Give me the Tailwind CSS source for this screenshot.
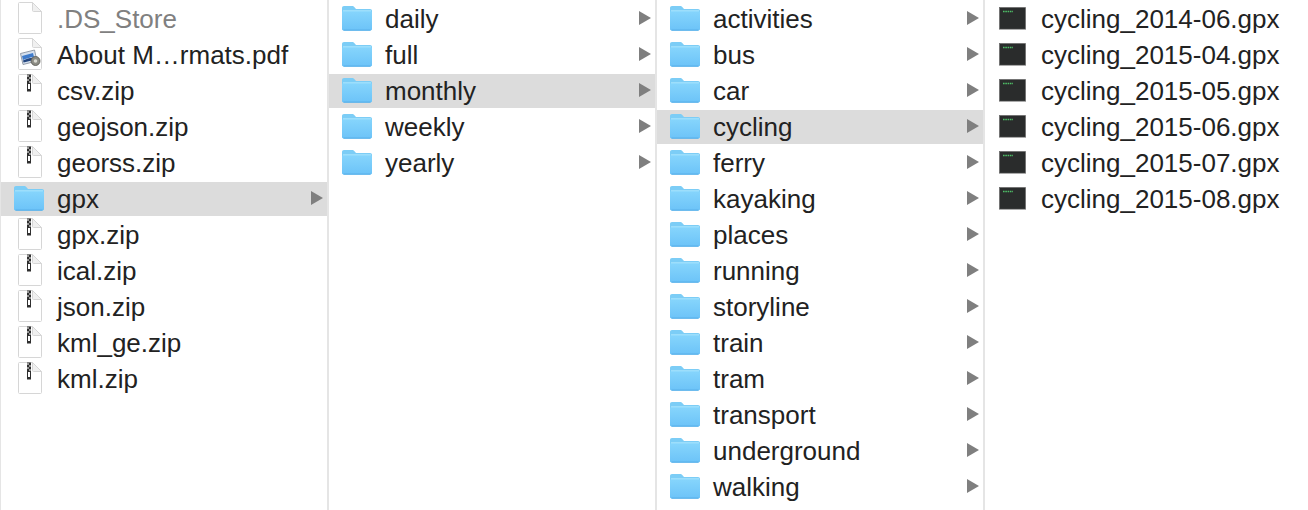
<!DOCTYPE html>
<html lang="en">
<head>
<meta charset="UTF-8">
<title>Finder columns</title>
<script src="https://cdn.jsdelivr.net/npm/@tailwindcss/browser@4"></script>
</head>
<body class="bg-white overflow-hidden">
<svg width="0" height="0" class="absolute">
  <defs>
    <linearGradient id="fg" x1="0" y1="0" x2="0" y2="1">
      <stop offset="0" stop-color="#86d5fc"/><stop offset="1" stop-color="#6cc3f8"/>
    </linearGradient>
    <symbol id="folder" viewBox="0 0 32 26">
      <path d="M1 3C1 1.800 1.800 1 3 1h8c1.200 0 1.800.4 2.500 1.300L15 4h14c1.300 0 2 .8 2 2v17.500c0 1.300-.7 2-2 2H3c-1.300 0-2-.7-2-2Z" fill="#7ccdf6"/>
      <path d="M1 7.500C1 6.600 1.600 6 3 6h26c1.400 0 2 .6 2 1.500v16c0 1.300-.7 2-2 2H3c-1.300 0-2-.7-2-2Z" fill="url(#fg)"/>
      <path d="M2 5.800h28" stroke="#ace6fe" stroke-width="1"/>
      <path d="M2.500 25.100h27" stroke="#54ace6" stroke-width="1"/>
    </symbol>
    <symbol id="page" viewBox="0 0 26 34">
      <path d="M1.500 2.500c0-.6.4-1 1-1h13l9 9v21c0 .6-.4 1-1 1h-21c-.6 0-1-.4-1-1Z" fill="#fff" stroke="#d6d6d6"/>
      <path d="M15.500 1.500v8c0 .6.400 1 1 1h8Z" fill="#f0f0f0" stroke="#d6d6d6"/>
    </symbol>
    <symbol id="zip" viewBox="0 0 26 34">
      <use href="#page"/>
      <rect x="10" y="1.500" width="4" height="17" fill="#2f2f2f"/>
      <path d="M10 3h2M12 5h2M10 7h2M12 9h2" stroke="#fff" stroke-width="1"/>
      <rect x="11" y="11" width="2" height="5" fill="#fff"/>
    </symbol>
    <symbol id="pdf" viewBox="0 0 26 34">
      <use href="#page"/>
      <path d="M3.500 16.500l14-3.500 2.500 11-14 3.500Z" fill="#d5e0ee" stroke="#7d8794" stroke-width=".8"/>
      <path d="M5 19l11-3 1 4c-4 0-8 2-11 3Z" fill="#3f7bcb"/>
      <path d="M6 23.500c4-2 8-3 12-3l.6 2-12 3Z" fill="#24467f"/>
      <circle cx="18.500" cy="24" r="4.500" fill="#8c8c84" stroke="#55554f" stroke-width=".8"/>
      <circle cx="18.500" cy="24" r="1.800" fill="#dadad2"/>
    </symbol>
    <symbol id="gpxfile" viewBox="0 0 27 23">
      <rect x=".5" y=".5" width="26" height="21.500" fill="#2a2c2c" stroke="#555" stroke-width=".5"/>
      <path d="M4 4.500h10" stroke="#4fbf67" stroke-width="1.400" stroke-dasharray="1.600 .7"/>
      <path d="M0 22.500h27" stroke="#aaa" stroke-width="1"/>
    </symbol>
    <symbol id="arrow" viewBox="0 0 12 14">
      <path d="M0 0l12 7-12 7Z" fill="#7f7f7f"/>
    </symbol>
  </defs>
</svg>

<div class="flex w-[1308px] h-[510px] text-[#222] font-['Liberation_Sans',Arial,sans-serif] text-[26px] antialiased">

  <!-- col 1 -->
  <ul class="w-[329px] shrink-0 border-l border-r-2 border-[#e5e5e5]">
    <li class="flex items-center h-[36px] pl-[16px] text-[#808080]"><svg class="w-[26px] h-[34px] mr-[14px]"><use href="#page"/></svg><span class="pt-[2px] leading-[34px]">.DS_Store</span></li>
    <li class="flex items-center h-[36px] pl-[16px]"><svg class="w-[26px] h-[34px] mr-[14px]"><use href="#pdf"/></svg><span class="pt-[2px] leading-[34px]">About M…rmats.pdf</span></li>
    <li class="flex items-center h-[36px] pl-[16px]"><svg class="w-[26px] h-[34px] mr-[14px]"><use href="#zip"/></svg><span class="pt-[2px] leading-[34px]">csv.zip</span></li>
    <li class="flex items-center h-[36px] pl-[16px]"><svg class="w-[26px] h-[34px] mr-[14px]"><use href="#zip"/></svg><span class="pt-[2px] leading-[34px]">geojson.zip</span></li>
    <li class="flex items-center h-[36px] pl-[16px]"><svg class="w-[26px] h-[34px] mr-[14px]"><use href="#zip"/></svg><span class="pt-[2px] leading-[34px]">georss.zip</span></li>
    <li class="flex items-center h-[36px] pl-[12px] pr-[4px] bg-[#dcdcdc] shadow-[inset_0_2px_0_#fff]"><svg class="w-[32px] h-[26px] mr-[12px]"><use href="#folder"/></svg><span class="pt-[2px] leading-[34px]">gpx</span><svg class="ml-auto w-[12px] h-[14px]"><use href="#arrow"/></svg></li>
    <li class="flex items-center h-[36px] pl-[16px]"><svg class="w-[26px] h-[34px] mr-[14px]"><use href="#zip"/></svg><span class="pt-[2px] leading-[34px]">gpx.zip</span></li>
    <li class="flex items-center h-[36px] pl-[16px]"><svg class="w-[26px] h-[34px] mr-[14px]"><use href="#zip"/></svg><span class="pt-[2px] leading-[34px]">ical.zip</span></li>
    <li class="flex items-center h-[36px] pl-[16px]"><svg class="w-[26px] h-[34px] mr-[14px]"><use href="#zip"/></svg><span class="pt-[2px] leading-[34px]">json.zip</span></li>
    <li class="flex items-center h-[36px] pl-[16px]"><svg class="w-[26px] h-[34px] mr-[14px]"><use href="#zip"/></svg><span class="pt-[2px] leading-[34px]">kml_ge.zip</span></li>
    <li class="flex items-center h-[36px] pl-[16px]"><svg class="w-[26px] h-[34px] mr-[14px]"><use href="#zip"/></svg><span class="pt-[2px] leading-[34px]">kml.zip</span></li>
  </ul>

  <!-- col 2 -->
  <ul class="w-[328px] shrink-0 border-r-2 border-[#e5e5e5]">
    <li class="flex items-center h-[36px] pl-[12px] pr-[4px]"><svg class="w-[32px] h-[26px] mr-[12px]"><use href="#folder"/></svg><span class="pt-[2px] leading-[34px]">daily</span><svg class="ml-auto w-[12px] h-[14px]"><use href="#arrow"/></svg></li>
    <li class="flex items-center h-[36px] pl-[12px] pr-[4px]"><svg class="w-[32px] h-[26px] mr-[12px]"><use href="#folder"/></svg><span class="pt-[2px] leading-[34px]">full</span><svg class="ml-auto w-[12px] h-[14px]"><use href="#arrow"/></svg></li>
    <li class="flex items-center h-[36px] pl-[12px] pr-[4px] bg-[#dcdcdc] shadow-[inset_0_2px_0_#fff]"><svg class="w-[32px] h-[26px] mr-[12px]"><use href="#folder"/></svg><span class="pt-[2px] leading-[34px]">monthly</span><svg class="ml-auto w-[12px] h-[14px]"><use href="#arrow"/></svg></li>
    <li class="flex items-center h-[36px] pl-[12px] pr-[4px]"><svg class="w-[32px] h-[26px] mr-[12px]"><use href="#folder"/></svg><span class="pt-[2px] leading-[34px]">weekly</span><svg class="ml-auto w-[12px] h-[14px]"><use href="#arrow"/></svg></li>
    <li class="flex items-center h-[36px] pl-[12px] pr-[4px]"><svg class="w-[32px] h-[26px] mr-[12px]"><use href="#folder"/></svg><span class="pt-[2px] leading-[34px]">yearly</span><svg class="ml-auto w-[12px] h-[14px]"><use href="#arrow"/></svg></li>
  </ul>

  <!-- col 3 -->
  <ul class="w-[328px] shrink-0 border-r-2 border-[#e5e5e5]">
    <li class="flex items-center h-[36px] pl-[12px] pr-[4px]"><svg class="w-[32px] h-[26px] mr-[12px]"><use href="#folder"/></svg><span class="pt-[2px] leading-[34px]">activities</span><svg class="ml-auto w-[12px] h-[14px]"><use href="#arrow"/></svg></li>
    <li class="flex items-center h-[36px] pl-[12px] pr-[4px]"><svg class="w-[32px] h-[26px] mr-[12px]"><use href="#folder"/></svg><span class="pt-[2px] leading-[34px]">bus</span><svg class="ml-auto w-[12px] h-[14px]"><use href="#arrow"/></svg></li>
    <li class="flex items-center h-[36px] pl-[12px] pr-[4px]"><svg class="w-[32px] h-[26px] mr-[12px]"><use href="#folder"/></svg><span class="pt-[2px] leading-[34px]">car</span><svg class="ml-auto w-[12px] h-[14px]"><use href="#arrow"/></svg></li>
    <li class="flex items-center h-[36px] pl-[12px] pr-[4px] bg-[#dcdcdc] shadow-[inset_0_2px_0_#fff]"><svg class="w-[32px] h-[26px] mr-[12px]"><use href="#folder"/></svg><span class="pt-[2px] leading-[34px]">cycling</span><svg class="ml-auto w-[12px] h-[14px]"><use href="#arrow"/></svg></li>
    <li class="flex items-center h-[36px] pl-[12px] pr-[4px]"><svg class="w-[32px] h-[26px] mr-[12px]"><use href="#folder"/></svg><span class="pt-[2px] leading-[34px]">ferry</span><svg class="ml-auto w-[12px] h-[14px]"><use href="#arrow"/></svg></li>
    <li class="flex items-center h-[36px] pl-[12px] pr-[4px]"><svg class="w-[32px] h-[26px] mr-[12px]"><use href="#folder"/></svg><span class="pt-[2px] leading-[34px]">kayaking</span><svg class="ml-auto w-[12px] h-[14px]"><use href="#arrow"/></svg></li>
    <li class="flex items-center h-[36px] pl-[12px] pr-[4px]"><svg class="w-[32px] h-[26px] mr-[12px]"><use href="#folder"/></svg><span class="pt-[2px] leading-[34px]">places</span><svg class="ml-auto w-[12px] h-[14px]"><use href="#arrow"/></svg></li>
    <li class="flex items-center h-[36px] pl-[12px] pr-[4px]"><svg class="w-[32px] h-[26px] mr-[12px]"><use href="#folder"/></svg><span class="pt-[2px] leading-[34px]">running</span><svg class="ml-auto w-[12px] h-[14px]"><use href="#arrow"/></svg></li>
    <li class="flex items-center h-[36px] pl-[12px] pr-[4px]"><svg class="w-[32px] h-[26px] mr-[12px]"><use href="#folder"/></svg><span class="pt-[2px] leading-[34px]">storyline</span><svg class="ml-auto w-[12px] h-[14px]"><use href="#arrow"/></svg></li>
    <li class="flex items-center h-[36px] pl-[12px] pr-[4px]"><svg class="w-[32px] h-[26px] mr-[12px]"><use href="#folder"/></svg><span class="pt-[2px] leading-[34px]">train</span><svg class="ml-auto w-[12px] h-[14px]"><use href="#arrow"/></svg></li>
    <li class="flex items-center h-[36px] pl-[12px] pr-[4px]"><svg class="w-[32px] h-[26px] mr-[12px]"><use href="#folder"/></svg><span class="pt-[2px] leading-[34px]">tram</span><svg class="ml-auto w-[12px] h-[14px]"><use href="#arrow"/></svg></li>
    <li class="flex items-center h-[36px] pl-[12px] pr-[4px]"><svg class="w-[32px] h-[26px] mr-[12px]"><use href="#folder"/></svg><span class="pt-[2px] leading-[34px]">transport</span><svg class="ml-auto w-[12px] h-[14px]"><use href="#arrow"/></svg></li>
    <li class="flex items-center h-[36px] pl-[12px] pr-[4px]"><svg class="w-[32px] h-[26px] mr-[12px]"><use href="#folder"/></svg><span class="pt-[2px] leading-[34px]">underground</span><svg class="ml-auto w-[12px] h-[14px]"><use href="#arrow"/></svg></li>
    <li class="flex items-center h-[36px] pl-[12px] pr-[4px]"><svg class="w-[32px] h-[26px] mr-[12px]"><use href="#folder"/></svg><span class="pt-[2px] leading-[34px]">walking</span><svg class="ml-auto w-[12px] h-[14px]"><use href="#arrow"/></svg></li>
  </ul>

  <!-- col 4 -->
  <ul class="flex-1">
    <li class="flex items-center h-[36px] pl-[14px]"><svg class="w-[27px] h-[23px] mr-[15px]"><use href="#gpxfile"/></svg><span class="pt-[2px] leading-[34px]">cycling_2014-06.gpx</span></li>
    <li class="flex items-center h-[36px] pl-[14px]"><svg class="w-[27px] h-[23px] mr-[15px]"><use href="#gpxfile"/></svg><span class="pt-[2px] leading-[34px]">cycling_2015-04.gpx</span></li>
    <li class="flex items-center h-[36px] pl-[14px]"><svg class="w-[27px] h-[23px] mr-[15px]"><use href="#gpxfile"/></svg><span class="pt-[2px] leading-[34px]">cycling_2015-05.gpx</span></li>
    <li class="flex items-center h-[36px] pl-[14px]"><svg class="w-[27px] h-[23px] mr-[15px]"><use href="#gpxfile"/></svg><span class="pt-[2px] leading-[34px]">cycling_2015-06.gpx</span></li>
    <li class="flex items-center h-[36px] pl-[14px]"><svg class="w-[27px] h-[23px] mr-[15px]"><use href="#gpxfile"/></svg><span class="pt-[2px] leading-[34px]">cycling_2015-07.gpx</span></li>
    <li class="flex items-center h-[36px] pl-[14px]"><svg class="w-[27px] h-[23px] mr-[15px]"><use href="#gpxfile"/></svg><span class="pt-[2px] leading-[34px]">cycling_2015-08.gpx</span></li>
  </ul>
</div>
</body>
</html>
